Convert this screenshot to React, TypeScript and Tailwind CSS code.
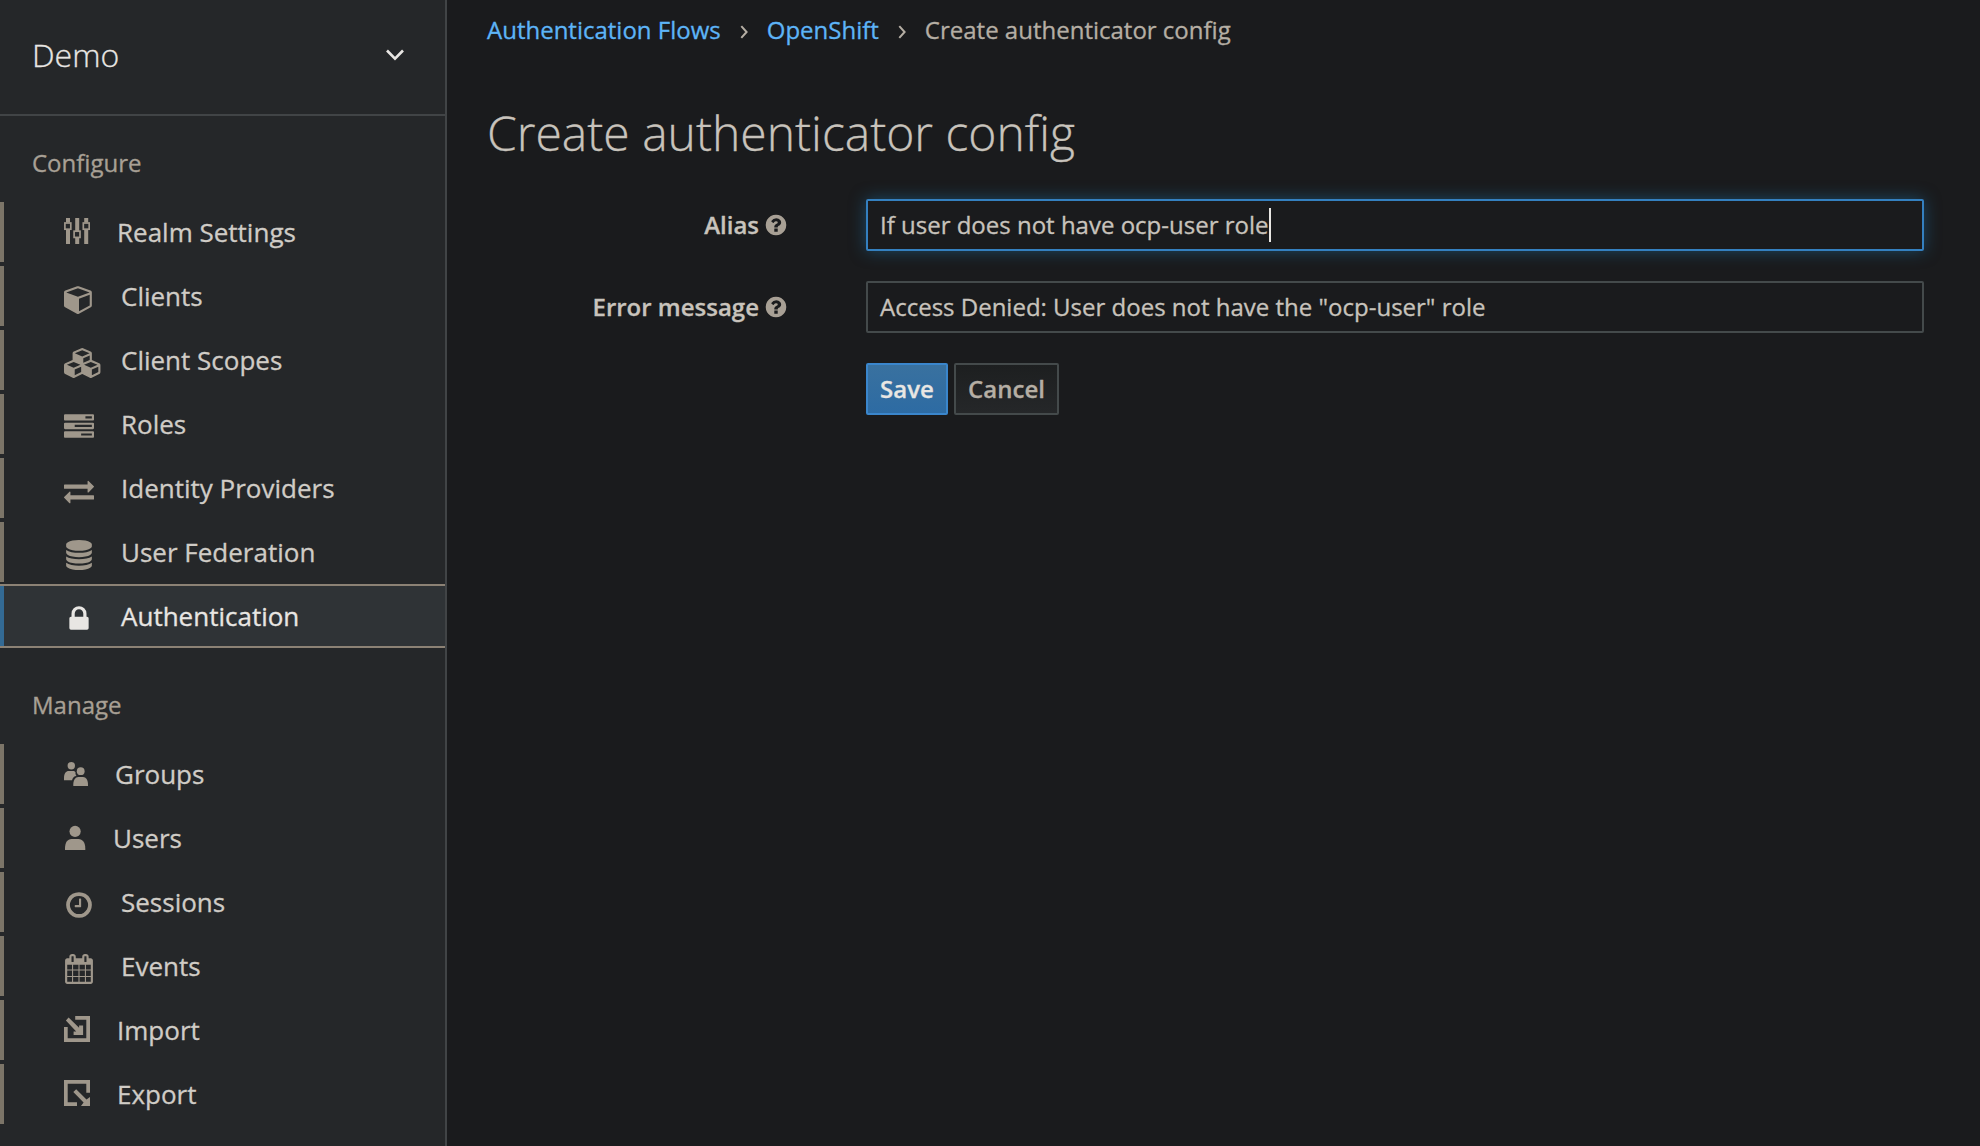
import React from "react";

const FA = {
  cube: "M896 1629l640-349v-636l-640 233v752zm-64-865l698-254-698-254-698 254zm832-252v768q0 35-18 65t-49 47l-704 384q-28 16-61 16t-61-16l-704-384q-31-17-49-47t-18-65v-768q0-40 23-73t61-47l704-256q22-8 44-8t44 8l704 256q38 14 61 47t23 73z",
  cubes:
    "M640 1632l384-192v-314l-384 164v342zm-64-454l404-173-404-173-404 173zm1088 454l384-192v-314l-384 164v342zm-64-454l404-173-404-173-404 173zm-448-293l384-165v-266l-384 164v267zm-64-379l441-189-441-189-441 189zm1088 518v416q0 36-19 67t-52 47l-448 224q-25 14-57 14t-57-14l-448-224q-4-2-7-4-2 2-7 4l-448 224q-25 14-57 14t-57-14l-448-224q-33-16-52-47t-19-67v-416q0-38 21.5-70t56.5-48l434-186v-400q0-38 21.5-70t56.5-48l448-192q23-10 50-10t50 10l448 192q35 16 56.5 48t21.5 70v400l434 186q36 16 57 48t21 70z",
  tasks:
    "M1024 1408h640v-128h-640v128zm-384-512h1024v-128h-1024v128zm640-512h384v-128h-384v128zm512 832v256q0 26-19 45t-45 19h-1664q-26 0-45-19t-19-45v-256q0-26 19-45t45-19h1664q26 0 45 19t19 45zm0-512v256q0 26-19 45t-45 19h-1664q-26 0-45-19t-19-45v-256q0-26 19-45t45-19h1664q26 0 45 19t19 45zm0-512v256q0 26-19 45t-45 19h-1664q-26 0-45-19t-19-45v-256q0-26 19-45t45-19h1664q26 0 45 19t19 45z",
  exchange:
    "M1792 1184v192q0 13-9.5 22.5t-22.5 9.5h-1376v192q0 13-9.5 22.5t-22.5 9.5q-12 0-24-10l-319-320q-9-9-9-22 0-14 9-23l320-320q9-9 23-9 13 0 22.5 9.5t9.5 22.5v192h1376q13 0 22.5 9.5t9.5 22.5zm0-544q0 14-9 23l-320 320q-9 9-23 9-13 0-22.5-9.5t-9.5-22.5v-192h-1376q-13 0-22.5-9.5t-9.5-22.5v-192q0-13 9.5-22.5t22.5-9.5h1376v-192q0-14 9-23t23-9q12 0 24 10l319 319q9 9 9 23z",
  database:
    "M896 768q237 0 443-43t325-127v170q0 69-103 128t-280 93.5-385 34.5-385-34.5-280-93.5-103-128v-170q119 84 325 127t443 43zm0 768q237 0 443-43t325-127v170q0 69-103 128t-280 93.5-385 34.5-385-34.5-280-93.5-103-128v-170q119 84 325 127t443 43zm0-384q237 0 443-43t325-127v170q0 69-103 128t-280 93.5-385 34.5-385-34.5-280-93.5-103-128v-170q119 84 325 127t443 43zm0-1152q208 0 385 34.5t280 93.5 103 128v128q0 69-103 128t-280 93.5-385 34.5-385-34.5-280-93.5-103-128v-128q0-69 103-128t280-93.5 385-34.5z",
  lock: "M640 768h512v-192q0-106-75-181t-181-75-181 75-75 181v192zm832 96v576q0 40-28 68t-68 28h-960q-40 0-68-28t-28-68v-576q0-40 28-68t68-28h32v-192q0-184 132-316t316-132 316 132 132 316v192h32q40 0 68 28t28 68z",
  clock:
    "M1024 544v448q0 14-9 23t-23 9h-320q-14 0-23-9t-9-23v-64q0-14 9-23t23-9h224v-352q0-14 9-23t23-9h64q14 0 23 9t9 23zm416 352q0-148-73-273t-198-198-273-73-273 73-198 198-73 273 73 273 198 198 273 73 273-73 198-198 73-273zm224 0q0 209-103 385.5t-279.5 279.5-385.5 103-385.5-103-279.5-279.5-103-385.5 103-385.5 279.5-279.5 385.5-103 385.5 103 279.5 279.5 103 385.5z",
  calendar:
    "M192 1664h288v-288h-288v288zm352 0h320v-288h-320v288zm-352-352h288v-320h-288v320zm352 0h320v-320h-320v320zm-352-384h288v-288h-288v288zm736 736h320v-288h-320v288zm-384-736h320v-288h-320v288zm768 736h288v-288h-288v288zm-384-352h320v-320h-320v320zm-352-864v-288q0-13-9.5-22.5t-22.5-9.5h-64q-13 0-22.5 9.5t-9.5 22.5v288q0 13 9.5 22.5t22.5 9.5h64q13 0 22.5-9.5t9.5-22.5zm736 864h288v-320h-288v320zm-384-384h320v-288h-320v288zm384 0h288v-288h-288v288zm32-480v-288q0-13-9.5-22.5t-22.5-9.5h-64q-13 0-22.5 9.5t-9.5 22.5v288q0 13 9.5 22.5t22.5 9.5h64q13 0 22.5-9.5t9.5-22.5zm384-64v1280q0 52-38 90t-90 38h-1408q-52 0-90-38t-38-90v-1280q0-52 38-90t90-38h128v-96q0-66 47-113t113-47h64q66 0 113 47t47 113v96h384v-96q0-66 47-113t113-47h64q66 0 113 47t47 113v96h128q52 0 90 38t38 90z",
  question:
    "M1024 1376v-192q0-14-9-23t-23-9h-192q-14 0-23 9t-9 23v192q0 14 9 23t23 9h192q14 0 23-9t9-23zm256-672q0-88-55.5-163t-138.5-116-170-41q-243 0-371 213-15 24 8 42l132 100q7 6 19 6 16 0 25-12 53-68 86-92 34-24 86-24 48 0 85.5 26t37.5 59q0 38-20 61t-68 45q-63 28-115.5 86.5t-52.5 125.5v36q0 14 9 23t23 9h192q14 0 23-9t9-23q0-19 21.5-49.5t54.5-49.5q32-18 49-28.5t46-35 44.5-48 28-60.5 12.5-81zm384 192q0 209-103 385.5t-279.5 279.5-385.5 103-385.5-103-279.5-279.5-103-385.5 103-385.5 279.5-279.5 385.5-103 385.5 103 279.5 279.5 103 385.5z",
};

function Glyph({ d }: { d: string }) {
  return (
    <svg viewBox="0 0 1792 1792" className="mt-1.5 h-[30px] w-[30px] shrink-0" fill="currentColor">
      <path d={d} />
    </svg>
  );
}

function CubesIcon() {
  return (
    <svg viewBox="0 0 2304 1792" className="mt-1.5 -mr-[8.600px] h-[30px] w-[38.600px] shrink-0" fill="currentColor">
      <path d={FA.cubes} />
    </svg>
  );
}

// Icons below are drawn on a canvas as tall as a navigation row.
function SlidersIcon() {
  return (
    <svg viewBox="0 0 26 60" className="h-[60px] w-[26px] shrink-0" fill="currentColor">
      <path d="M2 16h4v4.5h-4zM2 28h4v14h-4zM11.2 16h4v13h-4zM11.2 36h4v6h-4zM20.2 16h4v4.5h-4zM20.2 28h4v14h-4z" />
      <g fill="none" stroke="currentColor" strokeWidth="1.7">
        <rect x="0.9" y="21" width="5.9" height="6.2" />
        <rect x="10.1" y="29.2" width="5.9" height="6.2" />
        <rect x="19.3" y="21" width="5.9" height="6.2" />
      </g>
    </svg>
  );
}

function GroupsIcon() {
  return (
    <svg viewBox="0 0 24 60" className="h-[60px] w-6 shrink-0" fill="currentColor">
      <circle cx="7.3" cy="21.7" r="3.7" />
      <path d="M0 36.2V34C0 29.5 2 27 4.8 27H9c1.2 0 1.9.5 2.5 1.3-.2 2 .3 2.7 1 3.7-2.5 0-3.7 2-4.5 4.2z" />
      <circle cx="16.7" cy="27.2" r="3.9" />
      <path d="M9.300 42v-1.500c0-4.500 2.200-7.500 5-7.500h4.700c3 0 5 3 5 7.500V42z" />
    </svg>
  );
}

function UserIcon() {
  return (
    <svg viewBox="0 0 22 60" className="h-[60px] w-[22px] shrink-0" fill="currentColor">
      <circle cx="11.1" cy="23.4" r="5.6" />
      <path d="M1 42v-1.500C1 34.500 3.500 31 7.500 31h7c4 0 6.800 3.500 6.800 9.500V42z" />
    </svg>
  );
}

function ImportIcon() {
  return (
    <svg viewBox="0 0 26 60" className="h-[60px] w-[26px] shrink-0" fill="currentColor">
      <path d="M11.200 16H26v26H0V27h3.700v11.300h18.600V19.700H11.200z" />
      <path d="M4.600 17.600l10.500 10.200V25.500h4V35H9.600v-3.600h2.600L1.900 20.500z" />
    </svg>
  );
}

function ExportIcon() {
  return (
    <svg viewBox="0 0 26 60" className="h-[60px] w-[26px] shrink-0" fill="currentColor">
      <path d="M0 16h26v12.700h-3.700v-9H3.700v18.600H13V42H0z" />
      <path d="M12.200 25.300L22.500 35.400 26 33v9h-9l2.600-3.600L9.300 28.100z" />
    </svg>
  );
}

type Item = { label: string; icon: React.ReactNode; active?: boolean };

const configure: Item[] = [
  { label: "Realm Settings", icon: <SlidersIcon /> },
  { label: "Clients", icon: <Glyph d={FA.cube} /> },
  { label: "Client Scopes", icon: <CubesIcon /> },
  { label: "Roles", icon: <Glyph d={FA.tasks} /> },
  { label: "Identity Providers", icon: <Glyph d={FA.exchange} /> },
  { label: "User Federation", icon: <Glyph d={FA.database} /> },
  { label: "Authentication", icon: <Glyph d={FA.lock} />, active: true },
];

const manage: Item[] = [
  { label: "Groups", icon: <GroupsIcon /> },
  { label: "Users", icon: <UserIcon /> },
  { label: "Sessions", icon: <Glyph d={FA.clock} /> },
  { label: "Events", icon: <Glyph d={FA.calendar} /> },
  { label: "Import", icon: <ImportIcon /> },
  { label: "Export", icon: <ExportIcon /> },
];

function NavItem({ label, icon, active }: Item) {
  return (
    <li
      className={
        active
          ? "border-y-2 border-[#8c8275] bg-[#2f3336] text-[#e8e6e3]"
          : "border-y-2 border-transparent text-[#d0ccc6]"
      }
    >
      <a
        className={
          active
            ? "flex h-[60px] items-center gap-[27px] border-l-4 border-[#336a94] pl-[60px]"
            : "flex h-[60px] items-center gap-[27px] border-l-4 border-[#7c7568] pl-[60px]"
        }
      >
        <span className={active ? "flex" : "flex text-[#9f978b]"}>{icon}</span>
        <span className="text-[26px] leading-[60px] whitespace-nowrap">{label}</span>
      </a>
    </li>
  );
}

function NavSection({ title, items }: { title: string; items: Item[] }) {
  return (
    <section>
      <h2 className="pl-8 text-2xl leading-9 text-[#a8a095]">{title}</h2>
      <ul className="mt-[19px] -mb-0.5 flex flex-col">
        {items.map((item) => (
          <NavItem key={item.label} {...item} />
        ))}
      </ul>
    </section>
  );
}

function Angle() {
  return (
    <svg viewBox="0 0 8 14" className="mt-1 h-3.5 w-2" fill="none" stroke="#b5aea4" strokeWidth="2">
      <path d="M1.300 1.200L6.600 7l-5.300 5.800" />
    </svg>
  );
}

function FieldLabel({ children }: { children: string }) {
  return (
    <label className="mr-[78px] flex w-[301px] items-center justify-end gap-[5px] font-semibold text-[#c8c3bc]">
      {children}
      <svg viewBox="0 0 1792 1792" className="h-6 w-6 text-[#a8a095]" fill="currentColor">
        <path d={FA.question} />
      </svg>
    </label>
  );
}

export default function App() {
  return (
    <div className="flex h-[1146px] w-[1980px] overflow-hidden bg-[#1a1b1d] font-['Open_Sans',sans-serif] [-webkit-text-stroke:0.3px]">
      <aside className="flex w-[447px] shrink-0 flex-col border-r-2 border-[#414446] bg-[#252729]">
        <div className="flex h-[116px] items-center justify-between border-b-2 border-[#414446] pr-10 pb-[5px] pl-8">
          <span className="text-[32px] font-light text-[#e8e6e3]">Demo</span>
          <svg viewBox="0 0 20 14" className="h-3.5 w-5" fill="none" stroke="#e8e6e3" strokeWidth="2.6">
            <path d="M2 2.500l8 8.200 8-8.200" />
          </svg>
        </div>
        <nav className="flex flex-col gap-[41px] pt-[29px]">
          <NavSection title="Configure" items={configure} />
          <NavSection title="Manage" items={manage} />
        </nav>
      </aside>

      <main className="flex-1 pl-10 text-2xl">
        <div className="flex h-[60px] items-center gap-[19px] text-[#b5aea4]">
          <a className="text-[#5db4f7]">Authentication Flows</a>
          <Angle />
          <a className="text-[#5db4f7]">OpenShift</a>
          <Angle />
          <span>Create authenticator config</span>
        </div>
        <h1 className="mt-[43px] text-5xl leading-[60px] font-light text-[#c8c3bc]">Create authenticator config</h1>

        <form className="mt-9 flex flex-col gap-[30px]">
          <div className="flex h-[52px] items-center">
            <FieldLabel>Alias</FieldLabel>
            <div className="flex h-[52px] w-[1058px] items-center rounded-xs border-2 border-[#3480c0] px-3 text-[#c8c3bc] shadow-[0_0_16px_rgba(29,104,150,0.600)]">
              If user does not have ocp-user role
              <span className="ml-px h-[34px] w-0.5 bg-[#e8e6e3]" />
            </div>
          </div>
          <div className="flex h-[52px] items-center">
            <FieldLabel>Error message</FieldLabel>
            <div className="flex h-[52px] w-[1058px] items-center rounded-xs border-2 border-[#444a4b] px-3 text-[#c8c3bc]">
              Access Denied: User does not have the "ocp-user" role
            </div>
          </div>
          <div className="flex gap-1.5 pl-[379px] font-semibold">
            <button
              type="button"
              className="h-[52px] w-[82px] rounded-xs border-2 border-[#3a86cc] bg-linear-to-b from-[#39719f] to-[#2d6ba3] text-[#e8e6e3]"
            >
              Save
            </button>
            <button
              type="button"
              className="h-[52px] w-[105px] rounded-xs border-2 border-[#444a4b] bg-linear-to-b from-[#1d1f20] to-[#252729] text-[#b5aea4]"
            >
              Cancel
            </button>
          </div>
        </form>
      </main>
    </div>
  );
}
